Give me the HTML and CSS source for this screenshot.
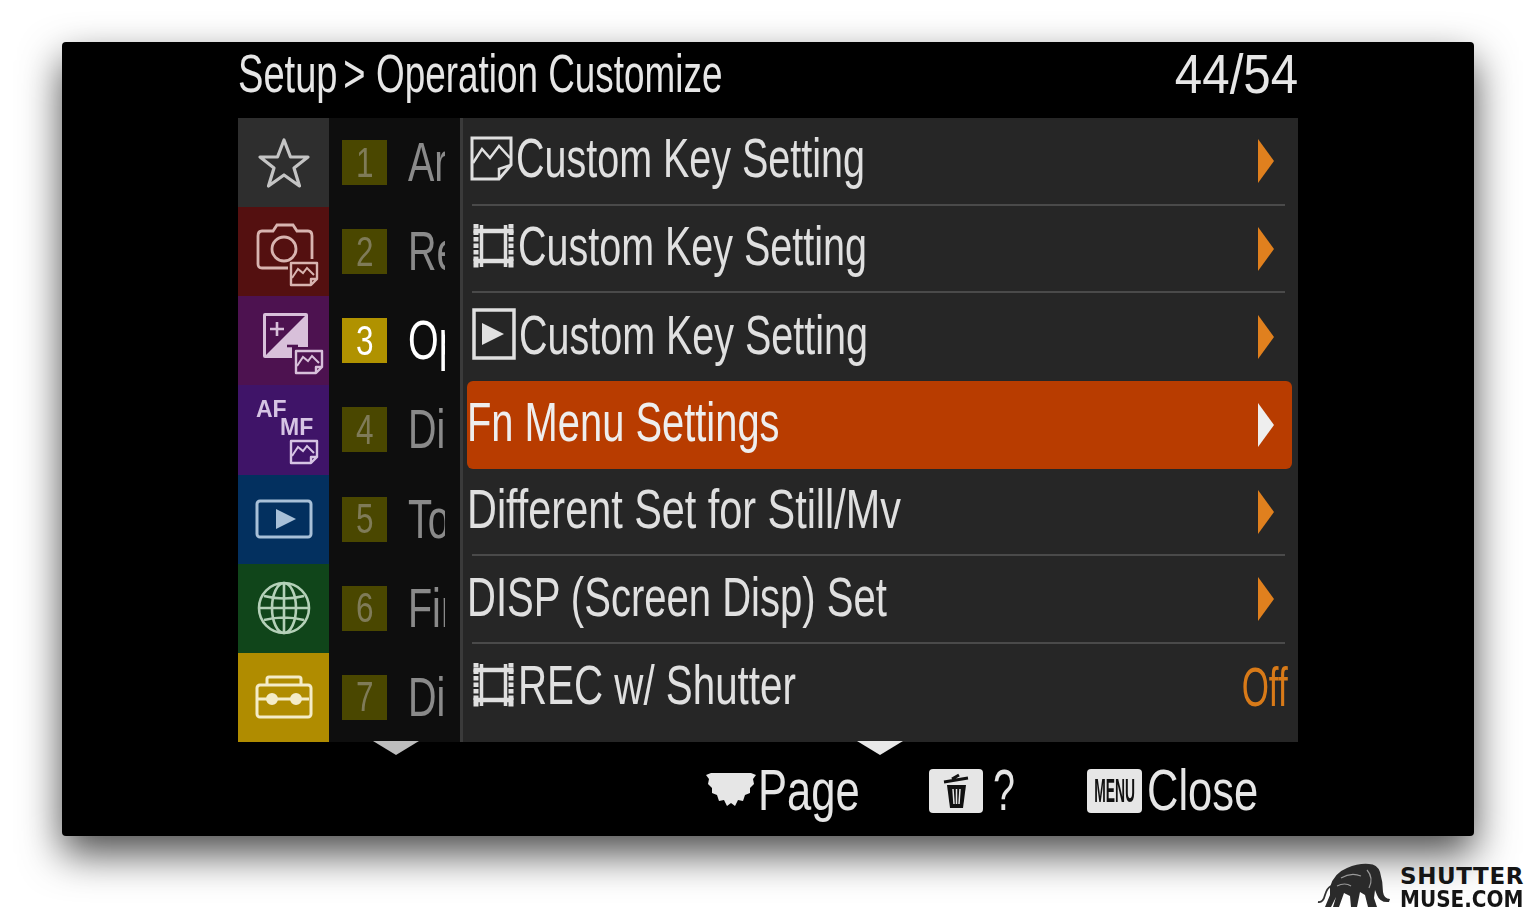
FILE: index.html
```html
<!DOCTYPE html>
<html lang="en">
<head>
  <meta charset="UTF-8">
  <title>Operation Customize</title>
  <link rel="stylesheet" href="styles.css">
</head>
<body>
  <svg class="defs" width="0" height="0">
    <symbol id="pic" viewBox="0 0 30 26">
      <path d="M2 2H28V18L22 24H2Z M22 24V18H28" fill="none" stroke="currentColor" stroke-width="2.4" stroke-linejoin="round"/>
      <path d="M3 17L9 8L14 12L18 7L25 14" fill="none" stroke="currentColor" stroke-width="2"/>
    </symbol>
    <symbol id="film" viewBox="0 0 42 46">
      <path d="M9 2V44M33 2V44" fill="none" stroke="currentColor" stroke-width="3.500"/>
      <path d="M1 8H41M1 38H41" fill="none" stroke="currentColor" stroke-width="4.500"/>
      <path d="M3.500 1V46M38.500 1V46" fill="none" stroke="currentColor" stroke-width="5" stroke-dasharray="4.500 2"/>
    </symbol>
  </svg>

  <div class="screen">
    <header class="title-row">
      <div class="title"><span class="crumb"><span class="cond">Setup &gt;</span></span><span class="cond fit-title">Operation Customize</span></div>
      <div class="count">44/54</div>
    </header>

    <div class="panel">
      <div class="cats">
        <div class="cat cat-fav">
          <svg width="54" height="52" viewBox="0 0 54 52"><path d="M27 3L33.500 20H51L37 31L42.500 49L27 38L11.500 49L17 31L3 20H20.500Z" fill="none" stroke="currentColor" stroke-width="3.200" stroke-linejoin="round"/></svg>
        </div>
        <div class="cat cat-shoot">
          <svg width="64" height="64" viewBox="0 0 64 64">
            <path d="M32 45H6Q2 45 2 41V13Q2 8 6 8H17L21 2H37L41 8H52Q56 8 56 13V36" fill="none" stroke="currentColor" stroke-width="2.800"/>
            <circle cx="28" cy="26" r="12" fill="none" stroke="currentColor" stroke-width="2.800"/>
            <use href="#pic" x="33" y="38" width="30" height="26"/>
          </svg>
        </div>
        <div class="cat cat-expo">
          <svg width="64" height="64" viewBox="0 0 64 64">
            <rect x="2" y="2" width="45" height="45" rx="2" fill="currentColor"/>
            <path d="M5 44V5H44Z" fill="#4d1250"/>
            <path d="M9 18H23M16 11V25" stroke="currentColor" stroke-width="2.600"/>
            <path d="M26 35H37" stroke="#4d1250" stroke-width="2.600"/>
            <rect x="31" y="36" width="32" height="28" fill="#4d1250"/>
            <use href="#pic" x="33" y="38" width="30" height="26"/>
          </svg>
        </div>
        <div class="cat cat-focus">
          <span class="af">AF</span><span class="mf">MF</span>
          <svg class="af-pic" width="30" height="26"><use href="#pic" width="30" height="26"/></svg>
        </div>
        <div class="cat cat-play">
          <svg width="58" height="40" viewBox="0 0 58 40"><rect x="2" y="2" width="54" height="36" rx="3" fill="none" stroke="currentColor" stroke-width="3"/><path d="M21 10L41 20L21 30Z" fill="currentColor"/></svg>
        </div>
        <div class="cat cat-net">
          <svg width="54" height="54" viewBox="0 0 54 54" fill="none" stroke="currentColor" stroke-width="2.600"><circle cx="27" cy="27" r="25"/><ellipse cx="27" cy="27" rx="12" ry="25"/><path d="M27 2V52M2 27H52M7 15Q27 20 47 15M7 39Q27 34 47 39"/></svg>
        </div>
        <div class="cat cat-setup">
          <svg width="58" height="44" viewBox="0 0 58 44" fill="none" stroke="currentColor" stroke-width="3"><path d="M12 10V4Q12 2 14 2H44Q46 2 46 4V10"/><rect x="2" y="10" width="54" height="32" rx="3"/><path d="M2 24H54"/><circle cx="17" cy="24" r="4.500" fill="currentColor"/><circle cx="41" cy="24" r="4.500" fill="currentColor"/></svg>
        </div>
      </div>

      <div class="subs">
        <div class="sub"><span class="num"><span class="digit">1</span></span><span class="sub-name"><span class="cond">Are</span></span></div>
        <div class="sub"><span class="num"><span class="digit">2</span></span><span class="sub-name"><span class="cond">Res</span></span></div>
        <div class="sub on"><span class="num"><span class="digit">3</span></span><span class="sub-name"><span class="cond">Ope</span></span></div>
        <div class="sub"><span class="num"><span class="digit">4</span></span><span class="sub-name"><span class="cond">Dia</span></span></div>
        <div class="sub"><span class="num"><span class="digit">5</span></span><span class="sub-name"><span class="cond">Tou</span></span></div>
        <div class="sub"><span class="num"><span class="digit">6</span></span><span class="sub-name"><span class="cond">Fin</span></span></div>
        <div class="sub"><span class="num"><span class="digit">7</span></span><span class="sub-name"><span class="cond">Dis</span></span></div>
      </div>

      <div class="items">
        <div class="item">
          <svg class="item-icon still" width="43" height="46" viewBox="0 0 43 46" fill="none" stroke="currentColor"><path d="M2 3H41V30L29 44H2Z" stroke-width="3"/><path d="M3 28L12 14L20 23L29 11L40 23M29 44V34L41 30" stroke-width="2.500"/></svg>
          <span class="label"><span class="cond">Custom Key Setting</span></span><i class="arrow"></i>
        </div>
        <div class="item">
          <svg class="item-icon" width="43" height="46"><use href="#film" width="43" height="46"/></svg>
          <span class="label"><span class="cond">Custom Key Setting</span></span><i class="arrow"></i>
        </div>
        <div class="item no-line">
          <svg class="item-icon" width="44" height="52" viewBox="0 0 44 52"><rect x="2" y="2" width="40" height="48" fill="none" stroke="currentColor" stroke-width="3.500"/><path d="M10 15L32 26L10 37Z" fill="currentColor"/></svg>
          <span class="label"><span class="cond">Custom Key Setting</span></span><i class="arrow"></i>
        </div>
        <div class="item selected">
          <span class="label"><span class="cond fit-fn">Fn Menu Settings</span></span><i class="arrow"></i>
        </div>
        <div class="item">
          <span class="label bare"><span class="cond fit-diff">Different Set for Still/Mv</span></span><i class="arrow"></i>
        </div>
        <div class="item">
          <span class="label bare"><span class="cond fit-disp">DISP (Screen Disp) Set</span></span><i class="arrow"></i>
        </div>
        <div class="item no-line">
          <svg class="item-icon" width="43" height="46"><use href="#film" width="43" height="46"/></svg>
          <span class="label"><span class="cond fit-rec">REC w/ Shutter</span></span><span class="value">Off</span>
        </div>
      </div>

      <i class="more more-subs"></i>
      <i class="more more-items"></i>
    </div>

    <footer class="keys">
      <svg class="wheel" width="50" height="38" viewBox="0 0 50 38"><path d="M0 6L5 4H45L50 6L47 10L48 15L44 19L44 24L39 26L37 32L32 31L29 37L25 34L21 37L18 31L13 32L11 26L6 24L6 19L2 15L3 10Z" fill="#e6e6e6"/></svg>
      <span class="key-text page"><span class="wide">Page</span></span>
      <span class="btn btn-trash">
        <svg width="28" height="38" viewBox="0 0 28 38"><path d="M2 10L26 6M10 7L17 3" stroke="#111" stroke-width="3" fill="none"/><path d="M5 13H24L21 36H8Z" fill="#111"/><path d="M11 17L12 32M14.500 17V32M18 17L17 32" stroke="#e6e6e6" stroke-width="1.500"/></svg>
      </span>
      <span class="key-text help"><span class="wide">?</span></span>
      <span class="btn btn-menu"><span class="menu-word">MENU</span></span>
      <span class="key-text close"><span class="wide">Close</span></span>
    </footer>
  </div>

  <div class="mark">
    <svg width="74" height="46" viewBox="0 0 74 46">
      <path d="M1 40Q6 41 8 33Q10 26 14 24" fill="none" stroke="#333" stroke-width="1.800"/>
      <path d="M13 25Q17 11 30 6Q42 1 52 2Q60 2 63 10Q66 20 66 30Q67 37 73 37L72 40Q63 41 60 33L58 28L57 36L60 45H51L48 33L43 30L40 45H34L33 34L27 31L22 45H16L19 35L14 45H8L13 33Z" fill="#2a2a2a"/>
      <path d="M50 8Q57 16 52 26M24 16Q34 10 44 14M20 24Q28 20 34 24" stroke="#999" stroke-width="1.200" fill="none"/>
    </svg>
    <div class="mark-text"><span class="mark-top">SHUTTER</span><span class="mark-bottom">MUSE.COM</span></div>
  </div>
</body>
</html>
```

FILE: styles.css
```css
* { margin: 0; padding: 0; box-sizing: border-box; }
body {
  background: #fff;
  width: 1536px;
  height: 918px;
  overflow: hidden;
  position: relative;
  font-family: 'Liberation Sans', sans-serif;
  color: #e6e6e6;
}
.defs { position: absolute; }

/* no condensed face installed, so the menu font is squeezed */
.cond {
  display: inline-block;
  white-space: nowrap;
  transform: scaleX(.705);
  transform-origin: left center;
}
.fit-title { transform: scaleX(.683); }
.fit-fn { transform: scaleX(.712); }
.fit-diff { transform: scaleX(.739); }
.fit-disp { transform: scaleX(.715); }
.fit-rec { transform: scaleX(.72); }
.wide {
  display: inline-block;
  white-space: nowrap;
  transform: scaleX(.75);
  transform-origin: left center;
}

.screen {
  width: 1412px;
  height: 794px;
  margin: 42px 0 0 62px;
  padding: 0 176px;
  background: #000;
  border-radius: 4px;
  box-shadow: 0 18px 40px rgba(0,0,0,.7);
  filter: blur(.5px);
}
.title-row {
  height: 76px;
  padding-bottom: 14px;
  display: flex;
  justify-content: space-between;
  align-items: center;
  font-size: 54px;
}
.title { display: flex; width: 700px; }
.crumb { flex: none; width: 138px; word-spacing: -7px; }
.count {
  font-size: 56px;
  transform: scaleX(.88);
  transform-origin: right center;
}

.panel {
  position: relative;
  height: 624px;
  display: grid;
  grid-template-columns: 91px 134px 1fr;
}
.cats, .subs {
  display: grid;
  grid-template-rows: repeat(7, 1fr);
}

.cat {
  position: relative;
  display: flex;
  align-items: center;
  justify-content: center;
}
.cat-fav { background: #2e2e2e; color: #c4c4c4; }
.cat-shoot { background: #541010; color: #d8b4b0; padding: 6px 0 0 8px; }
.cat-expo { background: #4d1250; color: #d8c0da; padding: 4px 0 0 18px; }
.cat-focus { background: #3f1468; color: #d6c4e4; }
.cat-play { background: #03305f; color: #a8c0d8; }
.cat-net { background: #10451a; color: #b4d0b8; }
.cat-setup { background: #b08c00; color: #f4ecc8; }
.af, .mf {
  position: absolute;
  font-weight: bold;
  font-size: 23px;
}
.af { left: 18px; top: 11px; }
.mf { left: 42px; top: 29px; }
.af-pic { position: absolute; left: 51px; top: 54px; }

.subs { background: #0e0e0e; border-right: 3px solid #3a3a3a; }
.sub {
  display: flex;
  align-items: center;
  padding-left: 13px;
  gap: 21px;
  color: #8a8a8a;
}
.num {
  flex: none;
  width: 45px;
  height: 45px;
  display: flex;
  align-items: center;
  justify-content: center;
  background: #4a4700;
  color: #7f7b58;
  font-size: 42px;
}
.digit { display: inline-block; transform: scaleX(.75); }
.sub-name {
  flex: none;
  width: 37px;
  padding-bottom: 2px;
  overflow: hidden;
  font-size: 56px;
}
.sub.on { color: #fff; }
.sub.on .num { background: #b09200; color: #fff; }

.items {
  display: grid;
  grid-template-rows: repeat(7, 87.7px);
  background: #262626;
  padding: 0 6px 0 4px;
}
.item {
  display: flex;
  align-items: center;
  min-width: 0;
  border-bottom: 2px solid #4a4a4a;
  margin: 0 7px 0 5px;
  font-size: 56px;
  color: #e0e0e0;
}
.item.no-line { border-bottom: 0; }
.item.selected {
  margin: 0;
  background: #b83c00;
  border-bottom: 0;
  border-radius: 6px;
  color: #eee;
}
.item-icon { margin: 0 3px 6px 0; flex: none; }
.item-icon.still { margin-left: -2px; }
.label { padding-bottom: 6px; }
.label.bare { margin-left: -5px; }
.arrow {
  margin-left: auto;
  margin-right: 11px;
  width: 0;
  height: 0;
  border-style: solid;
  border-width: 22px 0 22px 16px;
  border-color: transparent transparent transparent #e0801e;
}
.selected .arrow { border-left-color: #eee; margin-right: 18px; }
.value {
  margin-left: auto;
  margin-right: -3px;
  padding-bottom: 2px;
  color: #d87a18;
  font-size: 56px;
  transform: scaleX(.625);
  transform-origin: right center;
}

.more {
  position: absolute;
  width: 0;
  height: 0;
  border-style: solid;
  border-width: 14px 23px 0 23px;
  border-color: #d6d6d6 transparent transparent transparent;
  top: 623px;
}
.more-subs { left: 135px; border-top-color: #bdbdbd; }
.more-items { left: 619px; border-top-color: #e8e8e8; }

.keys {
  height: 94px;
  padding: 4px 0 0 468px;
  display: flex;
  align-items: center;
  font-size: 58px;
}
.wheel { margin-top: -6px; flex: none; }
.key-text { flex: none; margin-top: -4px; }
.page { margin-left: 2px; width: 99px; }
.btn {
  display: flex;
  align-items: center;
  justify-content: center;
  height: 44px;
  background: #e6e6e6;
  border-radius: 4px;
  color: #111;
  flex: none;
}
.btn-trash { width: 54px; margin-left: 72px; }
.help { margin-left: 10px; width: 21px; }
.help .wide { transform: scaleX(.68); }
.btn-menu { width: 55px; margin-left: 73px; }
.menu-word {
  font-size: 33px;
  font-weight: bold;
  transform: scaleX(.42);
}
.close { margin-left: 5px; width: 112px; }

.mark {
  position: absolute;
  left: 1317px;
  top: 862px;
  display: flex;
  align-items: flex-start;
  gap: 9px;
  color: #151515;
}
.mark-text {
  margin-top: 3px;
  font-family: 'DejaVu Sans', sans-serif;
  font-weight: bold;
  font-size: 23px;
  line-height: 23px;
  white-space: nowrap;
}
.mark-top { display: block; letter-spacing: .6px; }
.mark-bottom {
  display: block;
  transform: scaleX(.87);
  transform-origin: left center;
}
```
